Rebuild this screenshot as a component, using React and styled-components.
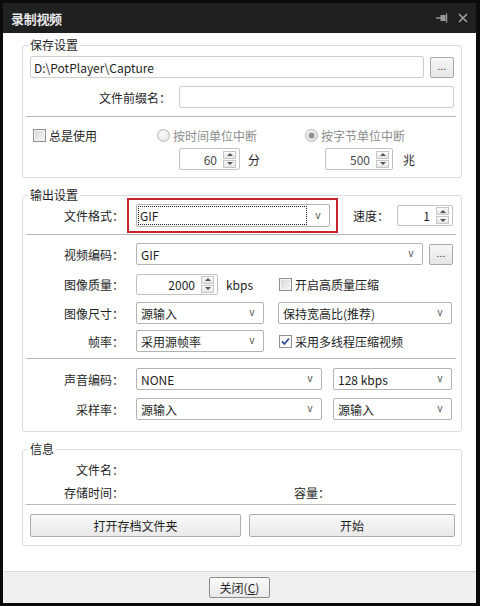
import React from 'react';
import styled, { createGlobalStyle, css } from 'styled-components';

const GlobalStyle = createGlobalStyle`
  * { box-sizing: border-box; }
  html, body { margin: 0; padding: 0; background: #0b0b0b; }
  body {
    font-family: "Noto Sans CJK SC", "Microsoft YaHei", sans-serif;
    font-size: 12px;
    color: #1e1e1e;
  }
`;

const Frame = styled.div`
  width: 480px;
  height: 606px;
  background: #0b0b0b;
  padding: 3px 4px 3px 3px;
  display: flex;
  flex-direction: column;
`;

const TitleBar = styled.div`
  height: 30px;
  flex: none;
  background: #1f2020;
  display: flex;
  align-items: center;
  padding: 0 8px 0 8px;
`;

const TitleText = styled.div`
  flex: 1;
  color: #e6e6e6;
  font-size: 13px;
  font-weight: bold;
  letter-spacing: -0.3px;
`;

const TitleIcons = styled.div`
  display: flex;
  align-items: center;
  gap: 10px;
`;

const Client = styled.div`
  flex: 1;
  background: #fff;
  display: flex;
  flex-direction: column;
`;

const Body = styled.div`
  flex: 1;
  padding: 5px 14px 0 19px;
`;

const Group = styled.fieldset`
  margin: ${p => p.$top || 0}px 0 0;
  padding: 0 7px ${p => p.$bottom}px;
  border: 1px solid #dcdcdc;
  border-radius: 3px;
  min-width: 0;
`;

const Legend = styled.legend`
  padding: 0 2px;
  margin-left: -2px;
  line-height: 14px;
`;

const Row = styled.div`
  display: flex;
  align-items: center;
  height: ${p => p.$h || 22}px;
  margin-top: ${p => p.$mt || 0}px;
`;

const Label = styled.span`
  width: ${p => p.$w}px;
  flex: none;
  text-align: ${p => p.$left ? 'left' : 'right'};
  margin-left: ${p => p.$ml || 0}px;
  margin-right: ${p => p.$mr || 0}px;
`;

const Separator = styled.div`
  height: 1px;
  background: #b8b8b8;
  margin: ${p => p.$mt}px -2px ${p => p.$mb || 0}px -4px;
`;

const TextInput = styled.div`
  flex: 1;
  height: 22px;
  border: 1px solid #cfcfcf;
  border-radius: 2px;
  display: flex;
  align-items: center;
  padding-left: 3px;
  margin-left: ${p => p.$ml || 0}px;
`;

const SmallButton = styled.div`
  width: 24px;
  height: 21px;
  flex: none;
  margin-left: 6px;
  border: 1px solid #a9a9a9;
  border-radius: 2px;
  background: linear-gradient(#f7f7f7, #e6e6e6);
  display: flex;
  align-items: center;
  justify-content: center;
  font-size: 9px;
  color: #333;
  letter-spacing: 0.5px;
  padding-bottom: 2px;
`;

const PushButton = styled.div`
  width: ${p => p.$w}px;
  height: ${p => p.$h || 23}px;
  margin-left: ${p => p.$ml || 0}px;
  flex: none;
  border: 1px solid ${p => p.$dark ? '#8c8c8c' : '#adadad'};
  border-radius: 2px;
  background: linear-gradient(#fafafa, #e9e9e9);
  display: flex;
  align-items: center;
  justify-content: center;
`;

/* combo box */
const ComboBox = styled.div`
  width: ${p => p.$w}px;
  height: ${p => p.$h || 22}px;
  margin-left: ${p => p.$ml || 0}px;
  flex: none;
  border: 1px solid #b3b3b3;
  border-radius: 2px;
  background: #fff;
  display: flex;
`;

const ComboValue = styled.span`
  flex: 1;
  display: flex;
  align-items: center;
  padding-left: 4px;
  ${p => p.$focus && css`
    margin: 1px 0 1px 1px;
    padding-left: 1px;
    border: 1px dotted #222;
  `}
`;

const ComboArrow = styled.span`
  width: 22px;
  display: flex;
  align-items: center;
  justify-content: center;
  font-family: "Liberation Sans", sans-serif;
  font-size: 10px;
  color: #555;
  padding-bottom: 1px;
`;

const Combo = ({ w, h, ml, focus, children }) => (
  <ComboBox $w={w} $h={h} $ml={ml}>
    <ComboValue $focus={focus}>{children}</ComboValue>
    <ComboArrow>v</ComboArrow>
  </ComboBox>
);

/* spin box */
const SpinBox = styled.div`
  width: ${p => p.$w}px;
  height: ${p => p.$h || 22}px;
  flex: none;
  border: 1px solid #c3c3c3;
  border-radius: 2px;
  background: #fff;
  display: flex;
  align-items: center;
  padding: 0 3px 0 4px;
  color: ${p => p.$muted ? '#4a4a4a' : '#1e1e1e'};
`;

const SpinValue = styled.span`
  flex: 1;
  text-align: right;
  padding-right: 6px;
`;

const SpinButtons = styled.div`
  display: flex;
  flex-direction: column;
  gap: 1px;
`;

const SpinArrow = styled.span`
  width: 13px;
  height: 8px;
  border: 1px solid #c6c6c6;
  background: linear-gradient(#fbfbfb, #e4e4e4);
  display: flex;
  align-items: center;
  justify-content: center;
  &::after {
    content: '';
    border-left: 3px solid transparent;
    border-right: 3px solid transparent;
    ${p => p.$down ? 'border-top: 3px solid #555;' : 'border-bottom: 3px solid #555;'}
  }
`;

const Spin = ({ w, h, muted, children }) => (
  <SpinBox $w={w} $h={h} $muted={muted}>
    <SpinValue>{children}</SpinValue>
    <SpinButtons>
      <SpinArrow />
      <SpinArrow $down />
    </SpinButtons>
  </SpinBox>
);

/* check box and radio */
const Option = styled.label`
  display: flex;
  align-items: center;
  gap: 3px;
  margin-left: ${p => p.$ml || 0}px;
  color: ${p => p.$disabled ? '#8c8c8c' : '#1e1e1e'};
`;

const CheckMark = styled.span`
  width: 13px;
  height: 13px;
  flex: none;
  border: 1px solid #8e8f8f;
  background: linear-gradient(135deg, #d6d6d6, #f8f8f8);
  box-shadow: inset 0 0 0 1px #f4f4f4;
  display: flex;
  align-items: center;
  justify-content: center;
  ${p => p.$checked && css`background: #fff; box-shadow: none;`}
`;

const RadioMark = styled.span`
  width: 13px;
  height: 13px;
  flex: none;
  border-radius: 50%;
  border: 1px solid #b5b5b5;
  background: radial-gradient(circle at 40% 35%, #fdfdfd, #dedede);
  display: flex;
  align-items: center;
  justify-content: center;
  &::after {
    content: '';
    width: 5px;
    height: 5px;
    border-radius: 50%;
    background: ${p => p.$checked ? '#8e8e8e' : 'transparent'};
    box-shadow: ${p => p.$checked ? '0 0 0 1px #c8c8c8' : 'none'};
  }
`;

const Check = ({ checked, ml, children }) => (
  <Option $ml={ml}>
    <CheckMark $checked={checked}>
      {checked && (
        <svg width="9" height="9" viewBox="0 0 9 9">
          <path d="M1 4.5 L3.5 7 L8 1.5" fill="none" stroke="#2c4f9e" strokeWidth="1.8" />
        </svg>
      )}
    </CheckMark>
    {children}
  </Option>
);

const Radio = ({ checked, children }) => (
  <Option $disabled>
    <RadioMark $checked={checked} />
    {children}
  </Option>
);

const OptionGrid = styled.div`
  display: grid;
  grid-template-columns: ${p => p.$cols};
  align-items: center;
  height: ${p => p.$h}px;
  margin-top: ${p => p.$mt || 0}px;
  padding-left: ${p => p.$pl || 0}px;
`;

const Cell = styled.div`
  display: flex;
  align-items: center;
  gap: ${p => p.$gap || 8}px;
  width: ${p => (p.$w ? `${p.$w}px` : 'auto')};
  flex: none;
`;

const Highlight = styled.div`
  border: 2px solid #c8232c;
  padding: 4px 6px 4px 7px;
  margin-left: 3px;
  flex: none;
`;

const Footer = styled.div`
  height: 32px;
  flex: none;
  border-top: 1px solid #dadada;
  background: #f0f0f0;
  display: flex;
  justify-content: center;
  padding-top: 5px;
`;

const PinIcon = () => (
  <svg width="12" height="10" viewBox="0 0 12 10">
    <path d="M0 5 H5" stroke="#9a9a9a" strokeWidth="1.4" />
    <rect x="4.5" y="2" width="5" height="6" fill="#9a9a9a" />
    <path d="M10.5 0.5 V9.5" stroke="#9a9a9a" strokeWidth="1.4" />
  </svg>
);

const CloseIcon = () => (
  <svg width="10" height="10" viewBox="0 0 10 10">
    <path d="M1 1 L9 9 M9 1 L1 9" stroke="#a8a8a8" strokeWidth="1.4" />
  </svg>
);

export default function App() {
  return (
    <Frame>
      <GlobalStyle />
      <TitleBar>
        <TitleText>录制视频</TitleText>
        <TitleIcons>
          <PinIcon />
          <CloseIcon />
        </TitleIcons>
      </TitleBar>

      <Client>
        <Body>
          <Group $bottom={7}>
            <Legend>保存设置</Legend>
            <Row $mt={4}>
              <TextInput>D:\PotPlayer\Capture</TextInput>
              <SmallButton>...</SmallButton>
            </Row>
            <Row $mt={8}>
              <Label $w={141}>文件前缀名：</Label>
              <TextInput $ml={8} />
            </Row>
            <Separator $mt={8} $mb={10} />
            <OptionGrid $cols="124px 148px 1fr" $h={16} $pl={3}>
              <Check>总是使用</Check>
              <Radio>按时间单位中断</Radio>
              <Radio checked>按字节单位中断</Radio>
            </OptionGrid>
            <OptionGrid $cols="149px 146px 1fr" $h={22} $mt={5}>
              <span />
              <Cell>
                <Spin w={61} muted>60</Spin>
                分
              </Cell>
              <Cell $gap={10}>
                <Spin w={68} muted>500</Spin>
                兆
              </Cell>
            </OptionGrid>
          </Group>

          <Group $top={10} $bottom={11}>
            <Legend>输出设置</Legend>
            <Row $h={35} $mt={-4}>
              <Label $w={94}>文件格式：</Label>
              <Highlight>
                <Combo w={194} h={23} focus>GIF</Combo>
              </Highlight>
              <Label $w={44} $ml={15} $left>速度：</Label>
              <Spin w={56} h={21}>1</Spin>
            </Row>
            <Separator $mt={1} />
            <Row $mt={8}>
              <Label $w={94} $mr={12}>视频编码：</Label>
              <Combo w={287}>GIF</Combo>
              <SmallButton>...</SmallButton>
            </Row>
            <Row $mt={8}>
              <Label $w={94} $mr={12}>图像质量：</Label>
              <Cell $w={128}>
                <Spin w={82} h={21}>2000</Spin>
                kbps
              </Cell>
              <Check ml={15}>开启高质量压缩</Check>
            </Row>
            <Row $mt={7}>
              <Label $w={94} $mr={12}>图像尺寸：</Label>
              <Combo w={128}>源输入</Combo>
              <Combo w={174} ml={14}>保持宽高比(推荐)</Combo>
            </Row>
            <Row $mt={6}>
              <Label $w={94} $mr={12}>帧率：</Label>
              <Combo w={128}>采用源帧率</Combo>
              <Check checked ml={15}>采用多线程压缩视频</Check>
            </Row>
            <Separator $mt={6} />
            <Row $mt={9}>
              <Label $w={94} $mr={12}>声音编码：</Label>
              <Combo w={186}>NONE</Combo>
              <Combo w={119} ml={11}>128 kbps</Combo>
            </Row>
            <Row $mt={8}>
              <Label $w={94} $mr={12}>采样率：</Label>
              <Combo w={186}>源输入</Combo>
              <Combo w={119} ml={11}>源输入</Combo>
            </Row>
          </Group>

          <Group $top={10} $bottom={8}>
            <Legend>信息</Legend>
            <Row $h={16} $mt={5}>
              <Label $w={94}>文件名：</Label>
            </Row>
            <Row $h={16} $mt={7}>
              <Label $w={94}>存储时间：</Label>
              <Label $w={206}>容量：</Label>
            </Row>
            <Separator $mt={4} $mb={9} />
            <Row $h={23}>
              <PushButton $w={211}>打开存档文件夹</PushButton>
              <PushButton $w={206} $ml={8}>开始</PushButton>
            </Row>
          </Group>
        </Body>

        <Footer>
          <PushButton $w={61} $h={21} $dark>
            关闭(<u>C</u>)
          </PushButton>
        </Footer>
      </Client>
    </Frame>
  );
}
